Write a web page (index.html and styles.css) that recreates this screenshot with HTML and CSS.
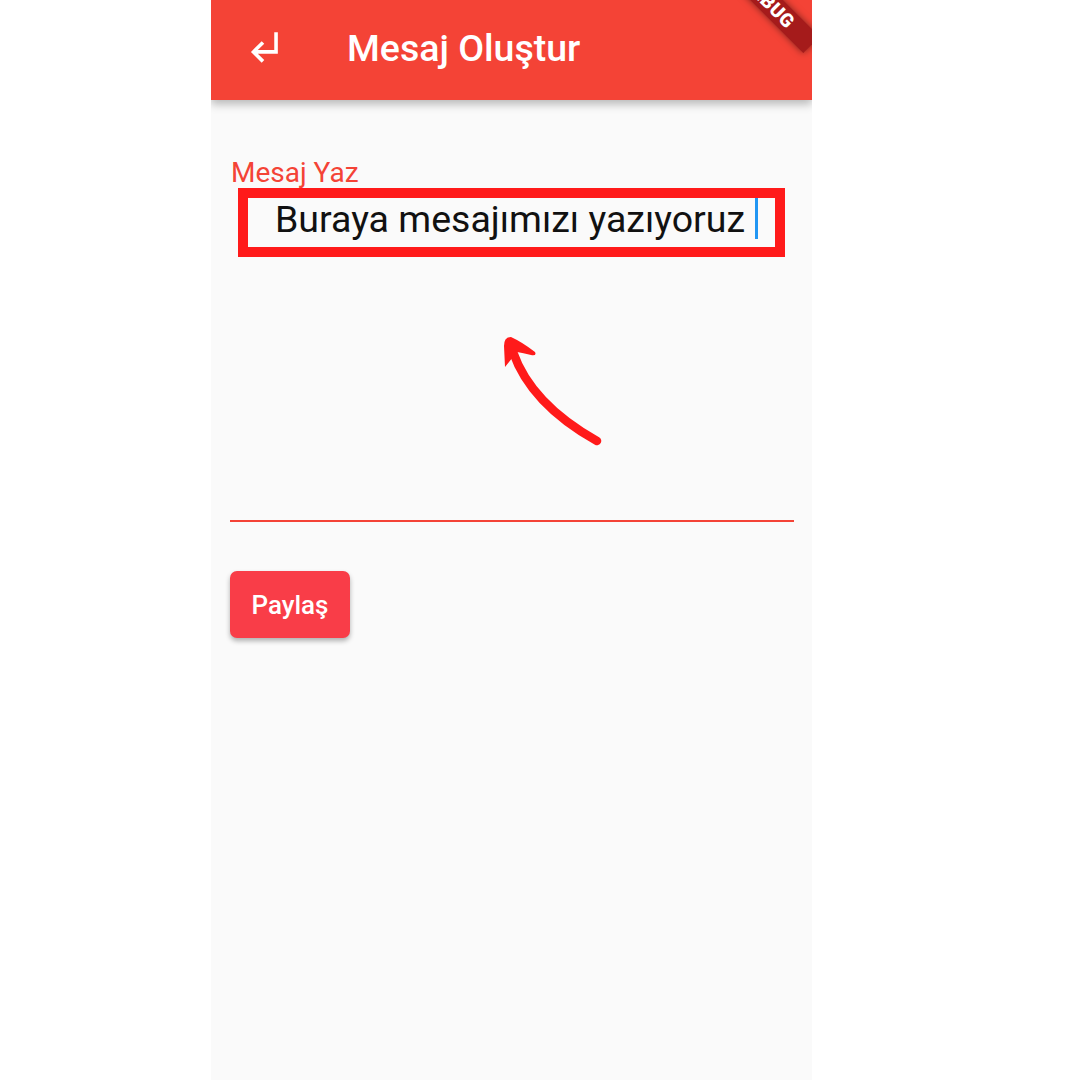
FILE: index.html
```html
<!DOCTYPE html>
<html lang="tr">
<head>
<meta charset="utf-8">
<title>Mesaj Oluştur</title>
<link rel="stylesheet" href="styles.css">
</head>
<body>
<div class="phone">
  <header class="appbar">
    <svg class="back-icon" viewBox="0 0 24 24" width="43" height="43" aria-hidden="true">
      <path d="M11 9l1.42 1.42L8.83 14H18V4h2v12H8.83l3.59 3.58L11 21l-6-6 6-6z" fill="#ffffff"/>
    </svg>
    <h1 class="title">Mesaj Oluştur</h1>
  </header>

  <main class="content">
    <div class="field">
      <label class="field-label">Mesaj Yaz</label>
      <div class="input-area">
        <div class="input-line">
          <span class="input-text">Buraya mesajımızı yazıyoruz</span>
          <span class="cursor"></span>
        </div>
      </div>
    </div>
    <button class="share-btn">Paylaş</button>
  </main>

  <div class="highlight-box"></div>

  <svg class="annot-arrow" viewBox="481 320 140 140" width="140" height="140" aria-hidden="true">
    <path d="M513 352 Q531 404 597 441" fill="none" stroke="#ff1a1a" stroke-width="8.5" stroke-linecap="round"/>
    <path d="M505 367 L504 346 Q504 337 511 337 Q522 342 535 352 Q537 356 531 355 Q523 353 517 352 Z" fill="#ff1a1a"/>
  </svg>

  <div class="debug-banner"><span>DEBUG</span></div>
</div>
</body>
</html>
```

FILE: styles.css
```css
html, body {
  margin: 0;
  padding: 0;
  background: #ffffff;
  overflow: hidden;
}

body {
  font-family: Roboto, "Noto Sans", "Liberation Sans", sans-serif;
}

.phone {
  position: relative;
  margin-left: 211px;
  width: 601px;
  height: 1080px;
  background: #fafafa;
  overflow: hidden;
}

.appbar {
  position: relative;
  z-index: 2;
  height: 100px;
  background: #f44336;
  display: flex;
  align-items: center;
  box-shadow: 0 4px 9px rgba(0, 0, 0, 0.28);
}

.back-icon {
  display: block;
  margin-left: 31px;
  margin-bottom: 8px;
  flex: none;
}

.title {
  margin: 0 0 4px 62px;
  font-size: 37.5px;
  font-weight: 500;
  line-height: 44px;
  color: #ffffff;
  letter-spacing: 0;
}

.content {
  padding: 57px 18px 0 19px;
}

.field {
  display: flex;
  flex-direction: column;
}

.field-label {
  font-size: 28px;
  line-height: 32px;
  color: #f44336;
  padding-left: 1px;
}

.input-area {
  height: 333px;
  box-sizing: border-box;
  padding-top: 8px;
  border-bottom: 2px solid #f44336;
}

.input-line {
  display: flex;
  align-items: flex-start;
  padding-left: 45px;
}

.input-text {
  font-size: 37.5px;
  line-height: 44px;
  color: #111111;
}

.cursor {
  display: block;
  width: 3px;
  height: 41px;
  margin-top: 1px;
  margin-left: 10px;
  background: #2196f3;
}

.share-btn {
  display: block;
  margin-top: 49px;
  width: 120px;
  height: 67px;
  border: none;
  border-radius: 7px;
  background: #f93d48;
  color: #ffffff;
  font-family: Roboto, "Noto Sans", "Liberation Sans", sans-serif;
  font-size: 26px;
  font-weight: 500;
  box-shadow: 0 3px 5px rgba(0, 0, 0, 0.3);
  padding: 0;
}

.highlight-box {
  position: absolute;
  left: 27px;
  top: 188px;
  width: 547px;
  height: 69px;
  box-sizing: border-box;
  border: 10px solid #ff1a1a;
}

.annot-arrow {
  position: absolute;
  left: 270px;
  top: 320px;
}

.debug-banner {
  position: absolute;
  z-index: 3;
  left: 498px;
  top: -9px;
  width: 120px;
  height: 23px;
  background: #a51b1b;
  box-shadow: 0 0 7px rgba(0, 0, 0, 0.5);
  transform: rotate(45deg);
  display: flex;
  align-items: center;
  justify-content: center;
}

.debug-banner span {
  font-size: 19px;
  font-weight: 900;
  line-height: 1;
  color: #ffffff;
  letter-spacing: 0.5px;
}
```
